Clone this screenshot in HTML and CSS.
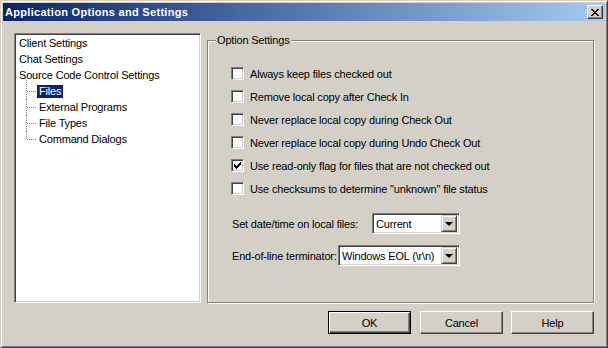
FILE: index.html
```html
<!DOCTYPE html>
<html lang="en">
  <head>
    <meta charset="UTF-8" />
    <meta name="viewport" content="width=device-width, initial-scale=1.0" />
    <title>Application Options and Settings</title>
    <link rel="stylesheet" href="styles.css">
  </head>
  <body>
    <div class="window">
      <div class="titlebar">
        <span class="title">Application Options and Settings</span>
        <button type="button" class="close-btn" aria-label="Close">
          <svg width="8" height="7" viewBox="0 0 8 7" shape-rendering="crispEdges">
            <path d="M0 0h2v1h-2zM6 0h2v1h-2zM1 1h2v1h-2zM5 1h2v1h-2zM2 2h4v1h-4zM3 3h2v1h-2zM2 4h4v1h-4zM1 5h2v1h-2zM5 5h2v1h-2zM0 6h2v1h-2zM6 6h2v1h-2z" fill="#000"/>
          </svg>
        </button>
      </div>

      <div class="main">
        <div class="tree">
          <ul class="tree-list">
            <li><span>Client Settings</span></li>
            <li><span>Chat Settings</span></li>
            <li>
              <span>Source Code Control Settings</span>
              <ul class="tree-children">
                <li><span class="selected">Files</span></li>
                <li><span>External Programs</span></li>
                <li><span>File Types</span></li>
                <li><span>Command Dialogs</span></li>
              </ul>
            </li>
          </ul>
        </div>

        <fieldset class="group">
          <legend>Option Settings</legend>
          <label class="check-row"><span class="check"></span>Always keep files checked out</label>
          <label class="check-row"><span class="check"></span>Remove local copy after Check In</label>
          <label class="check-row"><span class="check"></span>Never replace local copy during Check Out</label>
          <label class="check-row"><span class="check"></span>Never replace local copy during Undo Check Out</label>
          <label class="check-row"><span class="check">
            <svg width="9" height="9" viewBox="0 0 9 9" shape-rendering="crispEdges"><path d="M7 1h1v3h-1zM6 2h1v3h-1zM5 3h1v3h-1zM4 4h1v3h-1zM3 5h1v3h-1zM2 4h1v3h-1zM1 3h1v3h-1z" fill="#000"/></svg>
          </span>Use read-only flag for files that are not checked out</label>
          <label class="check-row"><span class="check"></span>Use checksums to determine "unknown" file status</label>

          <div class="combo-row first">
            <span>Set date/time on local files:</span>
            <div class="combo combo-short">
              <span class="combo-value">Current</span>
              <span class="combo-arrow"><span class="tri"></span></span>
            </div>
          </div>
          <div class="combo-row">
            <span>End-of-line terminator:</span>
            <div class="combo combo-long">
              <span class="combo-value">Windows EOL (\r\n)</span>
              <span class="combo-arrow"><span class="tri"></span></span>
            </div>
          </div>
        </fieldset>
      </div>

      <div class="footer">
        <button type="button" class="btn btn-default">OK</button>
        <button type="button" class="btn">Cancel</button>
        <button type="button" class="btn">Help</button>
      </div>
    </div>
  </body>
</html>
```

FILE: styles.css
```css
body {
  margin: 0;
  background: #D4D0C8;
  font-family: "Liberation Sans", Arial, sans-serif;
  font-size: 11px;
  letter-spacing: -0.18px;
  color: #000;
}

.window {
  width: 608px;
  height: 348px;
  box-sizing: border-box;
  display: flex;
  flex-direction: column;
  padding: 2px;
  background: #D4D0C8;
  border: 1px solid;
  border-color: #D4D0C8 #404040 #404040 #D4D0C8;
  box-shadow: inset 1px 1px #fff, inset -1px -1px #808080;
}

.titlebar {
  height: 18px;
  flex: none;
  display: flex;
  align-items: center;
  justify-content: space-between;
  padding: 0 2px;
  background: linear-gradient(to right, #0A246A, #A6CAF0);
}

.title {
  color: #fff;
  font-weight: bold;
  font-size: 11px;
  letter-spacing: 0.3px;
}

.close-btn {
  width: 16px;
  height: 14px;
  padding: 0;
  display: flex;
  align-items: center;
  justify-content: center;
  background: #D4D0C8;
  border: 1px solid;
  border-color: #fff #404040 #404040 #fff;
  box-shadow: inset -1px -1px #808080;
}

.main {
  display: flex;
  gap: 6px;
  padding: 12px 11px 0 11px;
}

.tree {
  width: 187px;
  height: 270px;
  box-sizing: border-box;
  background: #fff;
  border: 1px solid;
  border-color: #808080 #fff #fff #808080;
  box-shadow: inset 1px 1px #404040, inset -1px -1px #D4D0C8;
  padding: 1px 0 0 2px;
}

.tree ul {
  list-style: none;
  margin: 0;
  padding: 0;
}

.tree li {
  line-height: 16px;
  white-space: nowrap;
}

.tree li span {
  padding: 0 2px;
}

.tree-children li {
  position: relative;
  margin-left: 9px;
  padding-left: 11px;
}

.tree-children li::before {
  content: '';
  position: absolute;
  left: 0;
  top: 0;
  height: 100%;
  border-left: 1px dotted #808080;
}

.tree-children li:first-child::before {
  top: -3px;
  height: calc(100% + 3px);
}

.tree-children li:last-child::before {
  height: 8px;
}

.tree-children li::after {
  content: '';
  position: absolute;
  left: 1px;
  top: 8px;
  width: 9px;
  border-top: 1px dotted #808080;
}

.tree li span.selected {
  display: inline-block;
  line-height: 13px;
  background: #0A246A;
  color: #fff;
}

.group {
  flex: 1;
  min-width: 0;
  margin: 1px 0 0 0;
  padding: 15px 0 0 23px;
  border: 1px solid #808080;
  box-shadow: inset 1px 1px #fff, 1px 1px #fff;
}

.group legend {
  margin-left: -15px;
  padding: 0 1px;
  line-height: 13px;
  background: #D4D0C8;
}

.check-row {
  display: flex;
  align-items: center;
  gap: 6px;
  height: 23px;
  white-space: nowrap;
}

.check {
  width: 13px;
  height: 13px;
  box-sizing: border-box;
  flex: none;
  display: flex;
  align-items: center;
  justify-content: center;
  background: #fff;
  border: 1px solid;
  border-color: #808080 #fff #fff #808080;
  box-shadow: inset 1px 1px #404040, inset -1px -1px #D4D0C8;
}

.combo-row {
  width: 228px;
  margin: 11px 0 0 1px;
  display: flex;
  align-items: center;
  justify-content: space-between;
  white-space: nowrap;
}

.combo-row.first {
  margin-top: 13px;
}

.combo {
  height: 21px;
  box-sizing: border-box;
  display: flex;
  align-items: center;
  padding: 2px;
  background: #fff;
  border: 1px solid;
  border-color: #808080 #fff #fff #808080;
  box-shadow: inset 1px 1px #404040, inset -1px -1px #D4D0C8;
}

.combo-short {
  width: 88px;
}

.combo-long {
  width: 122px;
}

.combo-value {
  flex: 1;
  padding-left: 1px;
  overflow: hidden;
}

.combo-arrow {
  width: 16px;
  height: 17px;
  box-sizing: border-box;
  flex: none;
  display: flex;
  align-items: center;
  justify-content: center;
  background: #D4D0C8;
  border: 1px solid;
  border-color: #D4D0C8 #404040 #404040 #D4D0C8;
  box-shadow: inset 1px 1px #fff, inset -1px -1px #808080;
}

.tri {
  width: 0;
  height: 0;
  border-left: 4px solid transparent;
  border-right: 4px solid transparent;
  border-top: 4px solid #000;
}

.footer {
  display: flex;
  justify-content: flex-end;
  gap: 8px;
  padding: 8px 11px 0 0;
}

.btn {
  width: 83px;
  height: 23px;
  padding: 0;
  font-family: inherit;
  font-size: 11px;
  letter-spacing: inherit;
  color: #000;
  background: #D4D0C8;
  border: 1px solid;
  border-color: #fff #404040 #404040 #fff;
  box-shadow: inset -1px -1px #808080;
}

.btn-default {
  margin-right: 1px;
  border-color: #000;
  box-shadow: inset 1px 1px #fff, inset -1px -1px #404040, inset -2px -2px #808080;
}
```
